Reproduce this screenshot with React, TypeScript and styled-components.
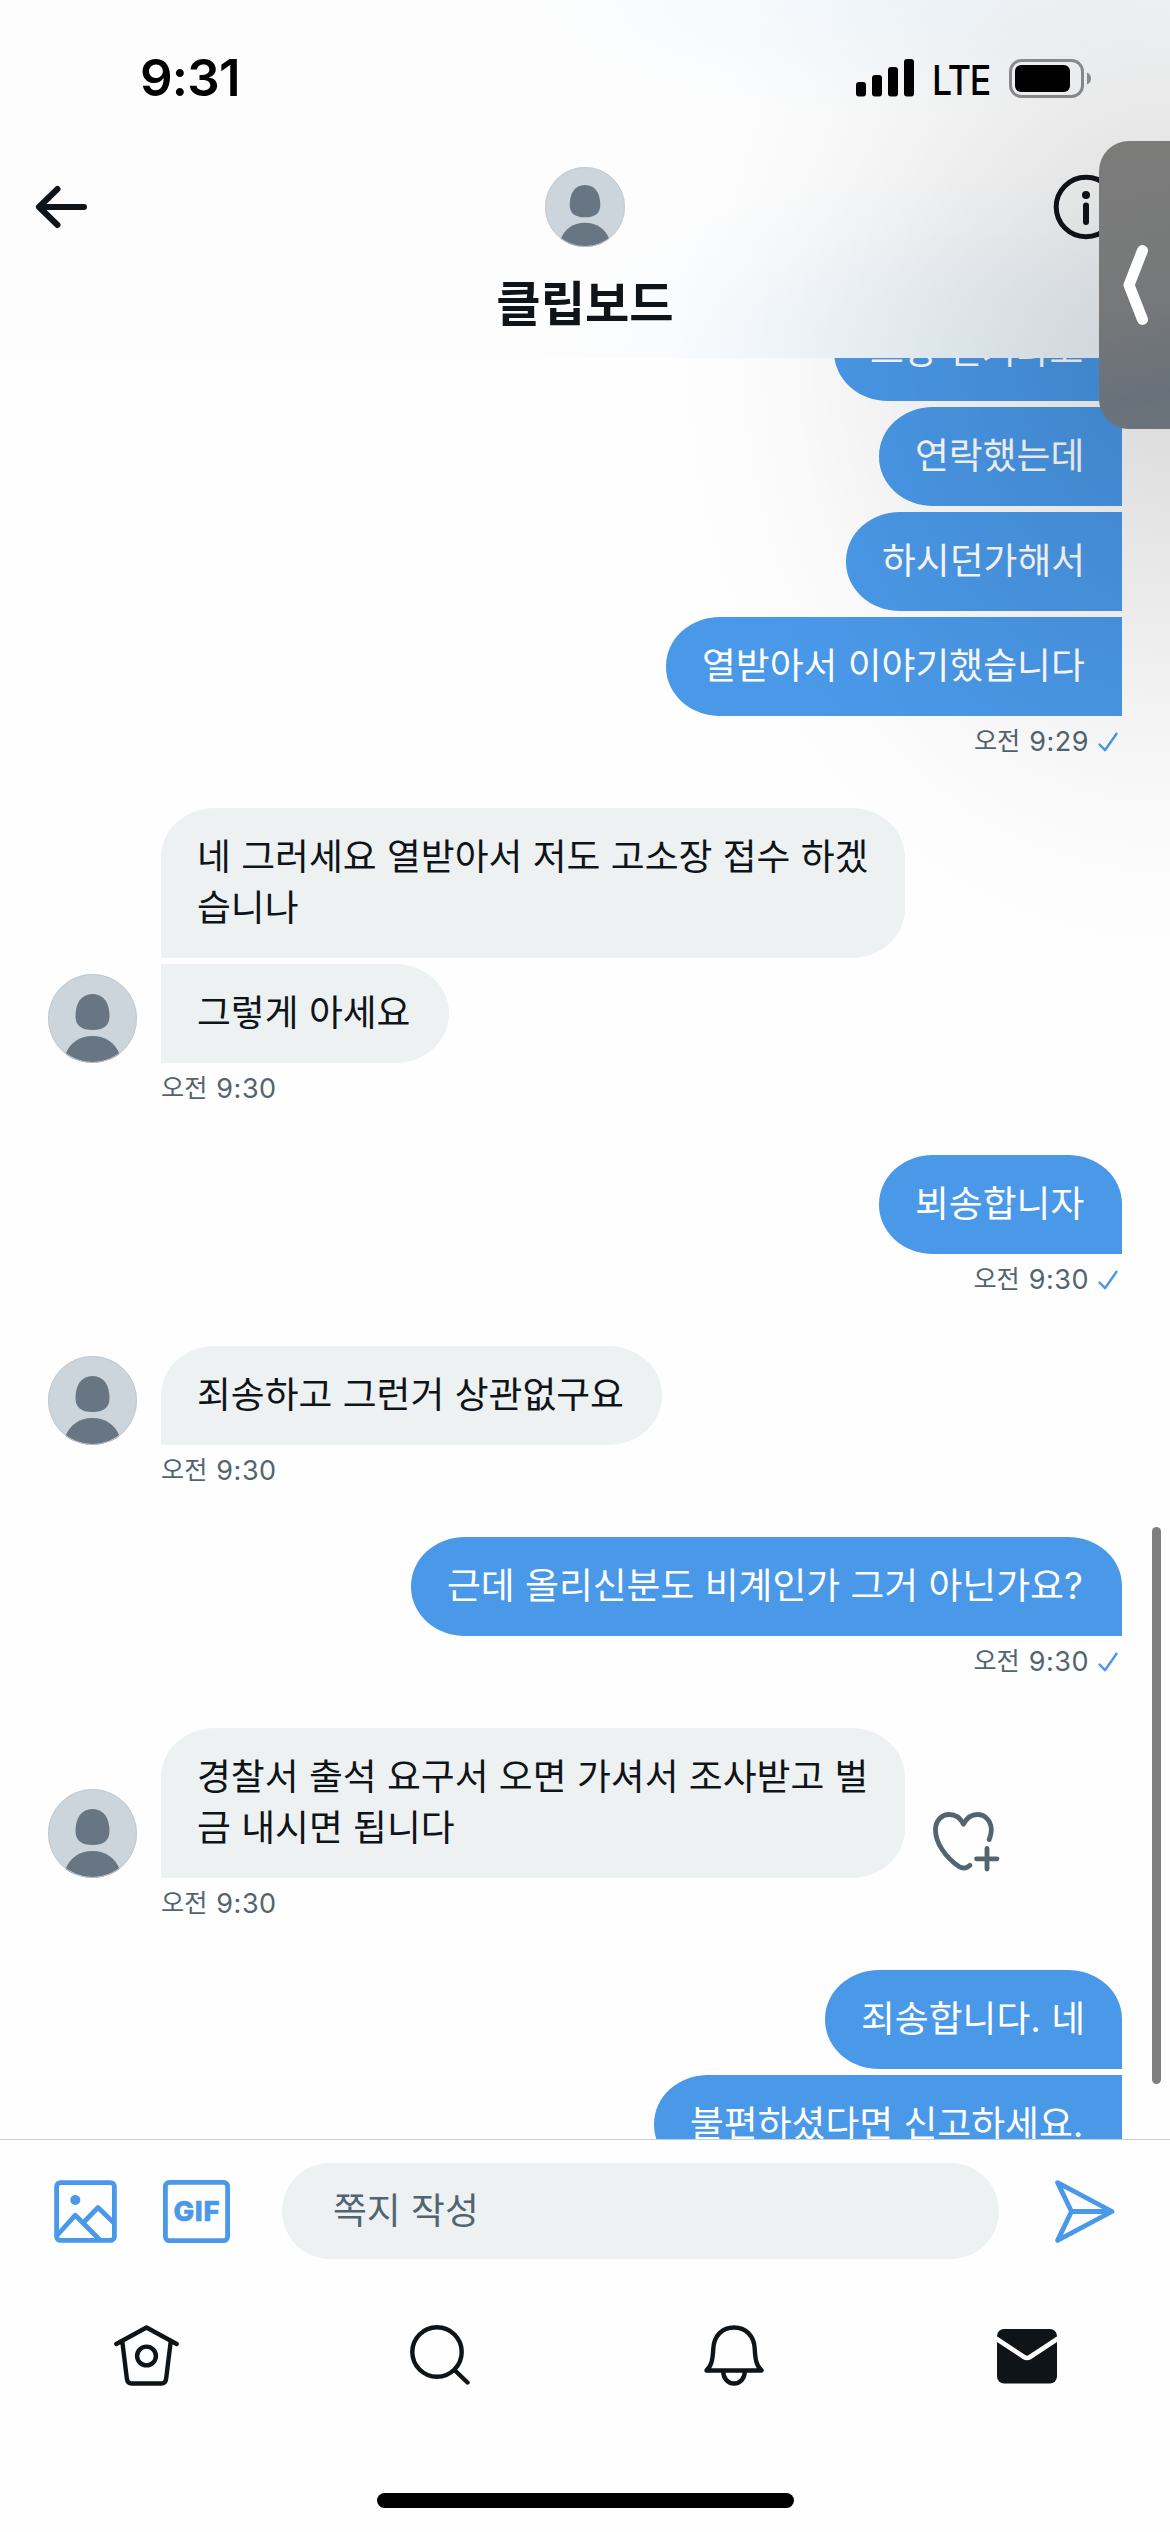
import React from "react";
import styled, { createGlobalStyle, css } from "styled-components";

const BLUE = "#4a99e9";
const INK = "#0f1419";
const SLATE = "#536471";
const MIST = "#edf1f2";

const GlobalStyle = createGlobalStyle`
  body {
    margin: 0;
    background: #fff;
    font-family: Inter, "Noto Sans CJK KR", sans-serif;
  }
  svg { display: block; flex: none; }
`;

const Screen = styled.div`
  position: relative;
  display: flex;
  flex-direction: column;
  width: 1170px;
  height: 2532px;
  overflow: hidden;
  background: #fefefe;
`;

const Header = styled.header`
  flex: none;
  height: 358px;
  background:
    radial-gradient(ellipse 420px 190px at 960px 358px, rgba(150, 212, 250, 0.17), rgba(165, 212, 252, 0.14) 35%, rgba(190, 220, 255, 0.07) 68%, rgba(220, 238, 255, 0)),
    radial-gradient(ellipse 380px 120px at 900px 0, rgba(205, 230, 250, 0.25), rgba(220, 238, 255, 0)),
    #fdfdfd;
`;

const StatusBar = styled.div`
  display: flex;
  justify-content: space-between;
  align-items: center;
  height: 156px;
  padding: 0 79px 0 140px;
  box-sizing: border-box;
  color: #000;
`;

const Clock = styled.span`
  font-size: 51px;
  font-weight: 600;
  letter-spacing: -0.8px;
  line-height: 60px;
`;

const StatusIcons = styled.div`
  display: flex;
  align-items: center;
`;

const Network = styled.span`
  width: 60px;
  margin: 3px 17px 0 18px;
  font-size: 41px;
  font-weight: 500;
  letter-spacing: -1.3px;
  line-height: 44px;
  transform: scaleX(0.87);
  transform-origin: left;
`;

const TitleBar = styled.div`
  display: grid;
  grid-template-columns: 120px 1fr 120px;
  align-items: start;
  padding: 0 31px;
`;

const HeaderButton = styled.button<{ $end?: boolean }>`
  display: flex;
  align-items: center;
  justify-content: ${(p) => (p.$end ? "flex-end" : "flex-start")};
  height: 80px;
  margin-top: 11px;
  padding: ${(p) => (p.$end ? "0 20px 0 0" : "0")};
  border: 0;
  background: none;
`;

const Contact = styled.div`
  display: flex;
  flex-direction: column;
  align-items: center;
  padding-top: 11px;
`;

const ContactName = styled.h1`
  margin: 27px 0 0;
  color: ${INK};
  font-size: 48.2px;
  font-weight: 700;
  line-height: 60px;
`;

const Thread = styled.main`
  flex: 1;
  min-height: 0;
  overflow: hidden;
`;

const ThreadContent = styled.div`
  display: flex;
  flex-direction: column;
  gap: 51px;
  margin-top: -56px;
`;

const Group = styled.section<{ $mine?: boolean }>`
  display: flex;
  flex-direction: column;
  align-items: ${(p) => (p.$mine ? "flex-end" : "flex-start")};
  padding: 0 48px;
`;

const MessageRow = styled.div`
  display: flex;
  align-items: flex-end;
  gap: 24px;
`;

const Bubbles = styled.div<{ $mine?: boolean }>`
  display: flex;
  flex-direction: column;
  align-items: ${(p) => (p.$mine ? "flex-end" : "flex-start")};
  gap: 6px;
`;

const incoming = css<{ $joined: boolean }>`
  border-radius: ${(p) => (p.$joined ? "0 54px 54px 0 / 0 49px 49px 0" : "54px 54px 54px 0 / 49px 49px 49px 0")};
  background: ${MIST};
  color: ${INK};
`;

const outgoing = css<{ $joined: boolean }>`
  border-radius: ${(p) => (p.$joined ? "54px 0 0 54px / 49px 0 0 49px" : "54px 54px 0 54px / 49px 49px 0 49px")};
  background: ${BLUE};
  color: #fff;
`;

const Bubble = styled.div<{ $mine?: boolean; $joined: boolean; $width: number }>`
  box-sizing: border-box;
  width: ${(p) => p.$width}px;
  padding: 23px 20px 25px 36px;
  font-size: 36.8px;
  line-height: 51px;
  white-space: pre;
  ${(p) => (p.$mine ? outgoing : incoming)}
  ${(p) => !p.$mine && !p.$joined && "border-radius: 54px 54px 54px 0 / 49px 49px 49px 0; border-bottom-left-radius: 0;"}
`;

const Stamp = styled.div<{ $mine?: boolean }>`
  display: flex;
  align-items: center;
  gap: 9px;
  height: 31px;
  margin: 10px ${(p) => (p.$mine ? "4px 0 0" : "0 0 113px")};
  color: ${SLATE};
  font-size: 25.2px;
  line-height: 31px;
`;

const StampTime = styled.span`
  font-size: 27px;
  letter-spacing: 0.5px;
`;

const ReactButton = styled.button`
  margin: 0 0 6px 4px;
  padding: 0;
  border: 0;
  background: none;
`;

const Composer = styled.footer`
  display: flex;
  align-items: center;
  flex: none;
  height: 143px;
  padding: 0 55px 0 54px;
  box-sizing: border-box;
  border-top: 1px solid #c4cfd6;
`;

const Field = styled.div`
  flex: 1;
  height: 96px;
  margin: 0 56px 0 52px;
  padding-left: 51px;
  border-radius: 48px;
  background: ${MIST};
  color: ${SLATE};
  font-size: 36.8px;
  line-height: 96px;
`;

const GifSlot = styled.div`
  margin-left: 46px;
`;

const TabBar = styled.nav`
  display: grid;
  grid-template-columns: repeat(4, 293.5px);
  flex: none;
  height: 211px;
  padding-top: 43px;
  box-sizing: border-box;
`;

const Tab = styled.div`
  display: flex;
  justify-content: center;
`;

const HomeIndicator = styled.div`
  flex: none;
  width: 417px;
  height: 15px;
  margin: 0 auto 24px;
  border-radius: 8px;
  background: #000;
`;

const ScrollThumb = styled.div`
  position: absolute;
  top: 1527px;
  right: 9px;
  width: 9px;
  height: 557px;
  border-radius: 5px;
  background: #7f7f7f;
`;

const Shade = styled.div`
  position: absolute;
  inset: 0 0 auto auto;
  width: 600px;
  height: 1000px;
  pointer-events: none;
  background: radial-gradient(
    ellipse 500px 610px at 600px 350px,
    rgba(0, 0, 0, 0.145),
    rgba(0, 0, 0, 0.125) 15%,
    rgba(0, 0, 0, 0.077) 40%,
    rgba(0, 0, 0, 0.042) 60%,
    rgba(0, 0, 0, 0.018) 76%,
    rgba(0, 0, 0, 0.007) 88%,
    transparent
  );
`;

const SideHandle = styled.button`
  position: absolute;
  top: 141px;
  right: 0;
  display: flex;
  align-items: center;
  width: 71px;
  height: 288px;
  padding: 0 0 0 24px;
  border: 0;
  border-radius: 30px 0 0 30px;
  background: linear-gradient(170deg, #7b7c7a, #777879 55%, #68717a 88%, #6e737a);
`;

const Avatar = ({ size }: { size: number }) => (
  <svg width={size} height={size} viewBox="0 0 89 89">
    <clipPath id={`round-${size}`}>
      <circle cx="44.5" cy="44.5" r="44.5" />
    </clipPath>
    <g clipPath={`url(#round-${size})`}>
      <rect width="89" height="89" fill="#ccd5dc" />
      <path d="M44.5 20c11.5 0 17 9.500 17 22 0 9.500-5.500 14-17 14s-17-4.500-17-14c0-12.500 5.500-22 17-22z" fill="#687684" />
      <path d="M44.500 62c13.500 0 22.500 7 27 18v10h-54v-10c4.500-11 13.500-18 27-18z" fill="#687684" />
    </g>
    <circle cx="44.5" cy="44.5" r="44" fill="none" stroke="#c2cad1" strokeWidth="1" />
  </svg>
);

const Check = () => (
  <svg width="20" height="20" viewBox="0 0 20 20" fill="none" stroke={BLUE} strokeWidth="2.4" strokeLinecap="round" strokeLinejoin="round">
    <path d="M1.500 12.500 7 18.200 18.500 1.800" />
  </svg>
);

const SignalIcon = () => (
  <svg width="58" height="38" viewBox="0 0 58 38" fill="#000">
    <rect x="0" y="23" width="10" height="14.500" rx="3" />
    <rect x="16" y="16" width="10" height="21.500" rx="3" />
    <rect x="32" y="8" width="10" height="29.500" rx="3" />
    <rect x="48" y="0" width="10" height="37.500" rx="3" />
  </svg>
);

const BatteryIcon = () => (
  <svg width="82" height="39" viewBox="0 0 82 39">
    <rect x="1.500" y="1.500" width="72" height="36" rx="11" fill="none" stroke="#8f9092" strokeWidth="3" />
    <rect x="6" y="6" width="55" height="27" rx="6" fill="#000" />
    <path d="M78 13.500c2.500 1 4 3.200 4 6s-1.500 5-4 6z" fill="#8f9092" />
  </svg>
);

const BackIcon = () => (
  <svg width="60" height="50" viewBox="0 0 60 50" fill="none" stroke={INK} strokeWidth="6" strokeLinecap="round" strokeLinejoin="round">
    <path d="M53 25H8M26.500 7 8 25l18.500 18" />
  </svg>
);

const InfoIcon = () => (
  <svg width="66" height="66" viewBox="0 0 66 66" fill="none" stroke={INK}>
    <circle cx="33" cy="33" r="29.800" strokeWidth="5" />
    <path d="M33 31.500V48" strokeWidth="6" strokeLinecap="round" />
    <circle cx="33" cy="21" r="4" fill={INK} stroke="none" />
  </svg>
);

const HeartPlusIcon = () => (
  <svg width="67" height="60" viewBox="0 0 67 60" fill="none" stroke={SLATE} strokeWidth="4.800" strokeLinecap="round" strokeLinejoin="round">
    <path d="M56.200 27.500c1.700-4 2.300-7.300 2.100-10.500C57.700 8.500 52 2.500 44.500 2.500c-6 0-11 3.700-14 9.700-3-6-8.200-9.700-14.200-9.700C8.600 2.500 2.700 8.800 2.500 17.500c-.2 13 10 28 23.500 37 3 1.900 6 1.900 8.800.3l2-1.500" />
    <path d="M54 36.500v20.500M43.500 46.800h20.500" />
  </svg>
);

const PhotoIcon = () => (
  <svg width="63" height="63" viewBox="0 0 63 63" fill="none" stroke={BLUE} strokeWidth="4.800" strokeLinejoin="round">
    <rect x="2.600" y="2.600" width="57.800" height="57.800" rx="4" />
    <circle cx="21.300" cy="20" r="5" fill={BLUE} stroke="none" />
    <path d="M3 55.500 21.300 35.200 46 60M29.500 42.500 44 27.500 60 43" />
  </svg>
);

const GifIcon = () => (
  <svg width="67" height="63" viewBox="0 0 67 63">
    <rect x="2.400" y="2.400" width="62.200" height="58.200" rx="4" fill="none" stroke={BLUE} strokeWidth="4.800" />
    <text x="33.500" y="41.300" textAnchor="middle" textLength="46" lengthAdjust="spacing" fill={BLUE} stroke={BLUE} strokeWidth="0.6" fontFamily="Inter, sans-serif" fontSize="27.500" fontWeight="800">
      GIF
    </text>
  </svg>
);

const SendIcon = () => (
  <svg width="60" height="63" viewBox="0 0 60 63" fill="none" stroke={BLUE} strokeWidth="4.800" strokeLinecap="round" strokeLinejoin="round">
    <path d="M2.600 2.600 57 31.500 2.600 60.400 16.500 31.500zM16.500 31.500H55" />
  </svg>
);

const HomeIcon = () => (
  <svg width="65" height="61" viewBox="0 0 65 61" fill="none" stroke={INK} strokeWidth="4.400" strokeLinecap="round" strokeLinejoin="round">
    <path d="M2.300 19 32.500 2.500 62.700 19M8.300 16.500l4.600 37.500c.4 3 2 4.500 4.700 4.500h29.800c2.700 0 4.300-1.500 4.700-4.500l4.600-37.500" />
    <circle cx="32.500" cy="31" r="9.400" />
  </svg>
);

const SearchIcon = () => (
  <svg width="60" height="60" viewBox="0 0 60 60" fill="none" stroke={INK} strokeWidth="4.400" strokeLinecap="round">
    <circle cx="27" cy="27" r="24.700" />
    <path d="M45 45.500 57.500 57.500" />
  </svg>
);

const BellIcon = () => (
  <svg width="60" height="61" viewBox="0 0 60 61" fill="none" stroke={INK} strokeWidth="4.400" strokeLinecap="round" strokeLinejoin="round">
    <path d="M2.500 45.500C8 40.500 8.800 33 9.300 23.500 10 10.500 18.500 2.500 30 2.500s20 8 20.700 21C51.200 33 52 40.500 57.500 45.500zM19.200 46c0 7.500 4.500 12.500 10.800 12.500S40.800 53.500 40.800 46" />
  </svg>
);

const MailIcon = () => (
  <svg width="60" height="62" viewBox="0 0 60 62">
    <rect x="0" y="4" width="60" height="54.500" rx="7" fill={INK} />
    <path d="M-1 13.500 27 32q3 2 6 0L61 13.500" fill="none" stroke="#fff" strokeWidth="4.600" />
  </svg>
);

const HandleChevron = () => (
  <svg width="28" height="82" viewBox="0 0 28 82" fill="none" stroke="#fff" strokeWidth="11" strokeLinecap="round" strokeLinejoin="round">
    <path d="M19.500 6.500 6 41l13.500 34.500" />
  </svg>
);

type Message = { text: string; width: number; joined?: boolean };
type MessageGroup = { mine: boolean; time?: string; react?: boolean; messages: Message[] };

const groups: MessageGroup[] = [
  {
    mine: true,
    time: "9:29",
    messages: [
      { text: "그냥 인거라고", width: 288, joined: true },
      { text: "연락했는데", width: 243, joined: true },
      { text: "하시던가해서", width: 276, joined: true },
      { text: "열받아서 이야기했습니다", width: 456, joined: true },
    ],
  },
  {
    mine: false,
    time: "9:30",
    messages: [
      { text: "네 그러세요 열받아서 저도 고소장 접수 하겠\n습니나", width: 744 },
      { text: "그렇게 아세요", width: 288, joined: true },
    ],
  },
  { mine: true, time: "9:30", messages: [{ text: "뵈송합니자", width: 243 }] },
  { mine: false, time: "9:30", messages: [{ text: "죄송하고 그런거 상관없구요", width: 501 }] },
  { mine: true, time: "9:30", messages: [{ text: "근데 올리신분도 비계인가 그거 아닌가요?", width: 711 }] },
  {
    mine: false,
    time: "9:30",
    react: true,
    messages: [{ text: "경찰서 출석 요구서 오면 가셔서 조사받고 벌\n금 내시면 됩니다", width: 744 }],
  },
  {
    mine: true,
    messages: [
      { text: "죄송합니다. 네", width: 297 },
      { text: "불편하셨다면 신고하세요.", width: 468, joined: true },
    ],
  },
];

export default function App() {
  return (
    <>
      <GlobalStyle />
      <Screen>
        <Header>
          <StatusBar>
            <Clock>9:31</Clock>
            <StatusIcons>
              <SignalIcon />
              <Network>LTE</Network>
              <BatteryIcon />
            </StatusIcons>
          </StatusBar>
          <TitleBar>
            <HeaderButton aria-label="뒤로">
              <BackIcon />
            </HeaderButton>
            <Contact>
              <Avatar size={80} />
              <ContactName>클립보드</ContactName>
            </Contact>
            <HeaderButton $end aria-label="정보">
              <InfoIcon />
            </HeaderButton>
          </TitleBar>
        </Header>

        <Thread>
          <ThreadContent>
            {groups.map((group, i) => (
              <Group key={i} $mine={group.mine}>
                <MessageRow>
                  {!group.mine && <Avatar size={89} />}
                  <Bubbles $mine={group.mine}>
                    {group.messages.map((m) => (
                      <Bubble key={m.text} $mine={group.mine} $joined={!!m.joined} $width={m.width}>
                        {m.text}
                      </Bubble>
                    ))}
                  </Bubbles>
                  {group.react && (
                    <ReactButton aria-label="반응 추가">
                      <HeartPlusIcon />
                    </ReactButton>
                  )}
                </MessageRow>
                {group.time && (
                  <Stamp $mine={group.mine}>
                    <span>오전</span>
                    <StampTime>{group.time}</StampTime>
                    {group.mine && <Check />}
                  </Stamp>
                )}
              </Group>
            ))}
          </ThreadContent>
        </Thread>

        <Composer>
          <PhotoIcon />
          <GifSlot>
            <GifIcon />
          </GifSlot>
          <Field>쪽지 작성</Field>
          <SendIcon />
        </Composer>

        <TabBar>
          <Tab><HomeIcon /></Tab>
          <Tab><SearchIcon /></Tab>
          <Tab><BellIcon /></Tab>
          <Tab><MailIcon /></Tab>
        </TabBar>
        <HomeIndicator />

        <ScrollThumb />
        <Shade />
        <SideHandle aria-label="열기">
          <HandleChevron />
        </SideHandle>
      </Screen>
    </>
  );
}
